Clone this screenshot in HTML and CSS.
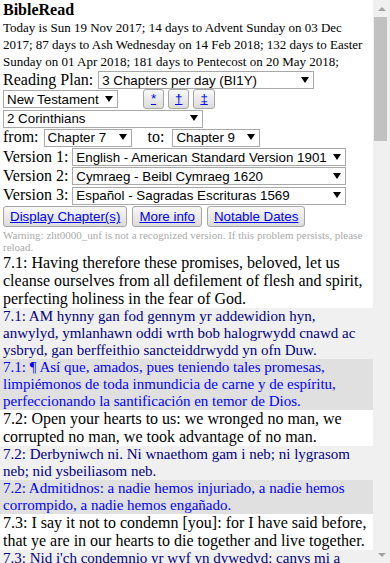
FILE: index.html
```html
<!DOCTYPE html>
<html lang="en">
<head>
    <meta charset="UTF-8">
    <meta name="viewport" content="width=device-width, initial-scale=1.0">
    <title>BibleRead</title>
    <link rel="stylesheet" href="styles.css">
</head>
<body>
<div class="page">
    <div class="top">
        <div class="title">BibleRead</div>
        <div class="today">Today is Sun 19 Nov 2017; 14 days to Advent Sunday on 03 Dec 2017; 87 days to Ash Wednesday on 14 Feb 2018; 132 days to Easter Sunday on 01 Apr 2018; 181 days to Pentecost on 20 May 2018;</div>

        <form class="controls">
            <div class="row">
                <label>Reading Plan:</label>
                <span class="sel sel-plan"><select><option>3 Chapters per day (BI1Y)</option></select></span>
            </div>
            <div class="row">
                <span class="sel sel-testament"><select><option>New Testament</option></select></span>
                <span class="marks">
                    <button type="button" class="btn mark"><span>*</span></button>
                    <button type="button" class="btn mark"><span>&dagger;</span></button>
                    <button type="button" class="btn mark"><span>&Dagger;</span></button>
                </span>
            </div>
            <div class="row">
                <span class="sel sel-book"><select><option>2 Corinthians</option></select></span>
            </div>
            <div class="row">
                <label>from:</label>
                <span class="sel sel-chapter"><select><option>Chapter 7</option></select></span>
                <label class="to">to:</label>
                <span class="sel sel-chapter"><select><option>Chapter 9</option></select></span>
            </div>
            <div class="row">
                <label>Version 1:</label>
                <span class="sel sel-version"><select><option>English - American Standard Version 1901</option></select></span>
            </div>
            <div class="row">
                <label>Version 2:</label>
                <span class="sel sel-version"><select><option>Cymraeg - Beibl Cymraeg 1620</option></select></span>
            </div>
            <div class="row">
                <label>Version 3:</label>
                <span class="sel sel-version"><select><option>Español - Sagradas Escrituras 1569</option></select></span>
            </div>
            <div class="row row-buttons">
                <button type="button" class="btn"><span>Display Chapter(s)</span></button>
                <button type="button" class="btn"><span>More info</span></button>
                <button type="button" class="btn"><span>Notable Dates</span></button>
            </div>
        </form>

        <div class="warning">Warning: zht0000_unf is not a recognized version. If this problem persists, please reload.</div>
    </div>

    <div class="verses">
        <div class="verse v1">7.1: Having therefore these promises, beloved, let us cleanse ourselves from all defilement of flesh and spirit, perfecting holiness in the fear of God.</div>
        <div class="verse v2">7.1: AM hynny gan fod gennym yr addewidion hyn, anwylyd, ymlanhawn oddi wrth bob halogrwydd cnawd ac ysbryd, gan berffeithio sancteiddrwydd yn ofn Duw.</div>
        <div class="verse v3">7.1: ¶ Así que, amados, pues teniendo tales promesas, limpiémonos de toda inmundicia de carne y de espíritu, perfeccionando la santificación en temor de Dios.</div>

        <div class="verse v1">7.2: Open your hearts to us: we wronged no man, we corrupted no man, we took advantage of no man.</div>
        <div class="verse v2">7.2: Derbyniwch ni. Ni wnaethom gam i neb; ni lygrasom neb; nid ysbeiliasom neb.</div>
        <div class="verse v3">7.2: Admitidnos: a nadie hemos injuriado, a nadie hemos corrompido, a nadie hemos engañado.</div>

        <div class="verse v1">7.3: I say it not to condemn [you]: for I have said before, that ye are in our hearts to die together and live together.</div>
        <div class="verse v2">7.3: Nid i'ch condemnio yr wyf yn dywedyd: canys mi a ddywedais o'r blaen, eich bod yn ein calonnau ni, i gyd-farw ac i gyd-fyw â chwi.</div>
        <div class="verse v3">7.3: No para condenaros lo digo; que ya he dicho antes que estáis en nuestros corazones, para morir y para vivir juntamente.</div>

        <div class="verse v1">7.4: Great is my boldness of speech toward you, great is my glorying on your behalf: I am filled with comfort, I overflow with joy in all our affliction.</div>
        <div class="verse v2">7.4: Mawr yw fy hyfdra i tuag atoch, mawr yw fy ngorfoledd o'ch plegid: yr wyf yn llawn o gysur, yr wyf yn dra llawen yn ein holl orthrymder ni.</div>
        <div class="verse v3">7.4: Mucha confianza tengo de vosotros, mucho me glorío de vosotros; lleno estoy de consolación, sobreabundo de gozo en todas nuestras tribulaciones.</div>
    </div>
</div>

<div class="scrollbar">
    <div class="sb-btn sb-up"></div>
    <div class="sb-thumb"></div>
    <div class="sb-track"></div>
    <div class="sb-btn sb-down"></div>
</div>
</body>
</html>
```

FILE: styles.css
```css
body {
    display: flex;
    height: 100vh;
    margin: 0;
    padding: 0;
    overflow: hidden;
    font-family: "Liberation Serif", "Times New Roman", serif;
    font-size: 16px;
    color: #000;
    background-color: #fff;
}
.page {
    flex: 1;
    min-width: 0;
    overflow: hidden;
}

/* fake window scrollbar */
.scrollbar {
    display: flex;
    flex-direction: column;
    flex: none;
    width: 17px;
    background: #f0f0f0;
}
.sb-btn {
    display: flex;
    align-items: center;
    justify-content: center;
    height: 17px;
    flex: none;
}
.sb-up::before {
    content: "";
    border-left: 4px solid transparent;
    border-right: 4px solid transparent;
    border-bottom: 4px solid #a3a3a3;
}
.sb-down::before {
    content: "";
    border-left: 4px solid transparent;
    border-right: 4px solid transparent;
    border-top: 4px solid #a3a3a3;
}
.sb-thumb {
    flex: none;
    height: 124px;
    margin: 0 3px 0 1px;
    background: #c1c1c1;
}
.sb-track {
    flex: 1;
}

.top {
    padding: 0 3px;
}
.title {
    font-weight: bold;
    line-height: 18px;
    padding-top: 1px;
}
.today {
    font-size: 13px;
    line-height: 17px;
}
.controls {
    margin: 0;
}
.row {
    display: flex;
    align-items: center;
    height: 19px;
    margin-bottom: 0.3px;
}
.row label {
    margin-right: 5px;
    white-space: nowrap;
}
.row label.to {
    margin-left: 16px;
    margin-right: 8px;
}
.sel {
    position: relative;
    display: inline-block;
    height: 18px;
}
.sel select {
    appearance: none;
    -webkit-appearance: none;
    width: 100%;
    height: 18px;
    margin: 0;
    padding: 0 3px;
    border: 1px solid #a9a9a9;
    border-radius: 0;
    background: #fff;
    color: #000;
    font-family: "Liberation Sans", Arial, sans-serif;
    font-size: 13.333px;
}
.sel::after {
    content: "";
    position: absolute;
    right: 5px;
    top: 6px;
    border-left: 4px solid transparent;
    border-right: 4px solid transparent;
    border-top: 6px solid #000;
    pointer-events: none;
}
.sel-plan { width: 216px; }
.sel-testament { width: 115px; }
.sel-book { width: 200px; }
.sel-chapter { width: 88px; }
.sel-version { width: 274px; margin-left: -1px; }
.marks {
    display: flex;
    gap: 4px;
    margin-left: 25px;
}
.btn {
    height: 21px;
    margin: 0;
    padding: 0 6px;
    border: 1px solid #a6a6a6;
    border-radius: 3px;
    background: linear-gradient(#f8f8f8, #dcdcdc);
    font-family: "Liberation Sans", Arial, sans-serif;
    font-size: 13.333px;
    color: #0000ee;
}
.btn span {
    text-decoration: underline;
}
.btn.mark {
    height: 20px;
    min-width: 21px;
}
.row-buttons {
    height: 22px;
    gap: 5px;
    margin-top: 1px;
}
.warning {
    margin-top: 1px;
    font-size: 11px;
    line-height: 12px;
    color: #aaa;
}
.verses {
    margin-top: 1px;
}
.verse {
    padding: 0 3px;
}
.v1 {
    background-color: #fff;
    color: #000;
}
.v2 {
    background-color: #f0f0f0;
    color: #000080;
    font-size: 15px;
}
.v3 {
    background-color: #e0e0e0;
    color: #0000ff;
    font-size: 15px;
}
```
